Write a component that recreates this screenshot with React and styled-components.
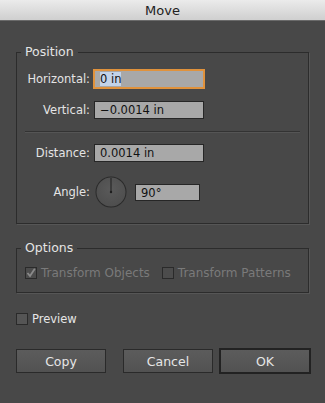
import React from "react";
import styled, { createGlobalStyle } from "styled-components";

const GlobalStyle = createGlobalStyle`
  html, body {
    margin: 0;
    padding: 0;
    background: #484848;
  }
  body {
    font-family: "DejaVu Sans", "Liberation Sans", sans-serif;
    font-size: 11.5px;
  }
`;

const Dialog = styled.div`
  width: 325px;
  height: 403px;
  background: #484848;
  display: flex;
  flex-direction: column;
  overflow: hidden;
`;

const TitleBar = styled.div`
  height: 20px;
  flex: 0 0 20px;
  background: linear-gradient(#ebebeb, #cfcfcf);
  border-bottom: 1px solid #6a6a6a;
  display: flex;
  align-items: center;
  justify-content: center;
  color: #222;
  font-size: 13px;
`;

const Body = styled.div`
  display: flex;
  flex-direction: column;
  padding: 24px 16px 0 16px;
`;

const Group = styled.fieldset`
  margin: ${(p) => p.$mt || 0}px 0 0 0;
  padding: ${(p) => p.$pt}px 8px ${(p) => p.$pb}px 8px;
  border: 1px solid #2c2c2c;
  box-shadow: 1px 1px 0 #565656;
  min-width: 0;
`;

const Legend = styled.legend`
  margin-left: -4px;
  padding: 0 4px;
  line-height: 14px;
  font-size: 12.5px;
  color: #e4e4e4;
`;

const Row = styled.div`
  display: flex;
  align-items: center;
  height: ${(p) => p.$h || 18}px;
  margin-top: ${(p) => p.$mt || 0}px;
`;

const Label = styled.div`
  width: 65px;
  flex: 0 0 65px;
  text-align: right;
  color: #e4e4e4;
  margin-right: 4px;
  white-space: nowrap;
`;

const Field = styled.div`
  box-sizing: border-box;
  width: ${(p) => p.$w || 110}px;
  height: ${(p) => p.$h || 18}px;
  background: #a8a8a8;
  border: 1px solid #262626;
  color: #111;
  font-size: 11.5px;
  line-height: 16px;
  padding-left: 5px;
  white-space: nowrap;
  ${(p) =>
    p.$focused &&
    `
    border-color: #e0923c;
    outline: 1px solid #e0923c;
  `}
`;

const Selected = styled.span`
  background: #c3d3e8;
`;

const Separator = styled.div`
  margin-top: 12px;
  height: 0;
  border-top: 1px solid #333;
  border-bottom: 1px solid #555;
`;

const DialKnob = styled.svg`
  margin-left: 1px;
  margin-right: 8px;
  flex: 0 0 32px;
`;

const CheckRow = styled.div`
  display: flex;
  align-items: center;
  gap: 12px;
  height: 12px;
  font-size: 12px;
`;

const CheckItem = styled.div`
  display: flex;
  align-items: center;
  gap: 4px;
  margin-top: ${(p) => p.$mt || 0}px;
  color: ${(p) => (p.$disabled ? "#7a7a7a" : "#e6e6e6")};
  white-space: nowrap;
`;

const Box = styled.div`
  box-sizing: border-box;
  width: 12px;
  height: 12px;
  border: 1px solid #2a2a2a;
  background: ${(p) => (p.$disabled ? "#4c4c4c" : "#555")};
  display: flex;
  align-items: center;
  justify-content: center;
`;

const ButtonRow = styled.div`
  display: flex;
  align-items: center;
  margin-top: 22px;
  margin-right: -2px;
`;

const Button = styled.div`
  box-sizing: border-box;
  width: ${(p) => (p.$default ? 92 : 90)}px;
  height: ${(p) => (p.$default ? 26 : 24)}px;
  border: ${(p) => (p.$default ? "2px solid #222" : "1px solid #2a2a2a")};
  background: linear-gradient(#5c5c5c, #525252);
  color: #e6e6e6;
  font-size: 12.5px;
  display: flex;
  align-items: center;
  justify-content: center;
  margin-left: ${(p) => p.$ml || 0}px;
`;

const Spacer = styled.div`
  flex: 1;
`;

const Dial = () => (
  <DialKnob width="32" height="32" viewBox="0 0 32 32">
    <defs>
      <radialGradient id="knob" cx="50%" cy="40%" r="60%">
        <stop offset="0%" stopColor="#5a5a5a" />
        <stop offset="100%" stopColor="#4e4e4e" />
      </radialGradient>
    </defs>
    <circle cx="16" cy="16" r="15.5" fill="#2a2a2a" />
    <circle cx="16" cy="16" r="14.5" fill="url(#knob)" />
    <line x1="16" y1="16.5" x2="16" y2="2" stroke="#1e1e1e" strokeWidth="1" />
    <circle cx="16" cy="16" r="1.2" fill="#1e1e1e" />
  </DialKnob>
);

const Check = () => (
  <svg width="10" height="10" viewBox="0 0 10 10">
    <path d="M1.5 5 L4 8 L8.8 0.8" fill="none" stroke="#8a8a8a" strokeWidth="1.8" />
  </svg>
);

export default function App() {
  return (
    <>
      <GlobalStyle />
      <Dialog>
        <TitleBar>Move</TitleBar>
        <Body>
          <Group $pt={11} $pb={15}>
            <Legend>Position</Legend>
            <Row>
              <Label>Horizontal:</Label>
              <Field $focused>
                <Selected>0 in</Selected>
              </Field>
            </Row>
            <Row $mt={13}>
              <Label>Vertical:</Label>
              <Field>−0.0014 in</Field>
            </Row>
            <Separator />
            <Row $mt={11}>
              <Label>Distance:</Label>
              <Field>0.0014 in</Field>
            </Row>
            <Row $mt={14} $h={32}>
              <Label>Angle:</Label>
              <Dial />
              <Field $w={65} $h={17}>
                90°
              </Field>
            </Row>
          </Group>

          <Group $mt={17} $pt={12} $pb={13}>
            <Legend>Options</Legend>
            <CheckRow>
              <CheckItem $disabled>
                <Box $disabled>
                  <Check />
                </Box>
                Transform Objects
              </CheckItem>
              <CheckItem $disabled>
                <Box $disabled />
                Transform Patterns
              </CheckItem>
            </CheckRow>
          </Group>

          <CheckItem $mt={19}>
            <Box />
            Preview
          </CheckItem>

          <ButtonRow>
            <Button>Copy</Button>
            <Spacer />
            <Button>Cancel</Button>
            <Button $default $ml={6}>
              OK
            </Button>
          </ButtonRow>
        </Body>
      </Dialog>
    </>
  );
}
